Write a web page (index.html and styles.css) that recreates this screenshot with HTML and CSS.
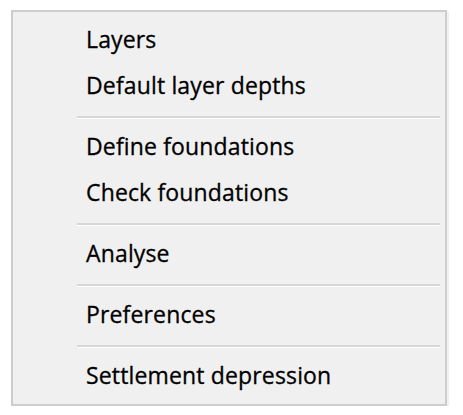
FILE: index.html
```html
<!DOCTYPE html>
<html>
<head>
<meta charset="utf-8">
<link rel="stylesheet" href="styles.css">
</head>
<body>
<div class="menu">
  <div class="item">Layers</div>
  <div class="item">Default layer depths</div>
  <div class="sep"></div>
  <div class="item">Define foundations</div>
  <div class="item">Check foundations</div>
  <div class="sep"></div>
  <div class="item">Analyse</div>
  <div class="sep"></div>
  <div class="item">Preferences</div>
  <div class="sep"></div>
  <div class="item">Settlement depression</div>
</div>
</body>
</html>
```

FILE: styles.css
```css
html, body {
  margin: 0;
  padding: 0;
  background: #ffffff;
}
body {
  padding: 10px 0 0 11px;
}
.menu {
  width: 432px;
  border: 2px solid #cdcdcd;
  background: #f0f0f0;
  padding: 6px 0 4px 0;
  box-shadow: 2px 2px 1px rgba(0,0,0,0.06);
  font-family: "Open Sans", "Noto Sans", sans-serif;
  font-size: 23px;
  letter-spacing: 0.15px;
  color: #000;
  -webkit-text-stroke: 0.3px #000;
}
.item {
  height: 46px;
  line-height: 43px;
  padding-left: 73px;
  white-space: nowrap;
}
.sep {
  height: 15px;
  display: flex;
  align-items: center;
  padding-left: 64px;
  padding-right: 5px;
}
.sep::before {
  content: "";
  flex: 1;
  height: 2px;
  background: #d7d7d7;
  border-bottom: 1px solid #ffffff;
}
```
